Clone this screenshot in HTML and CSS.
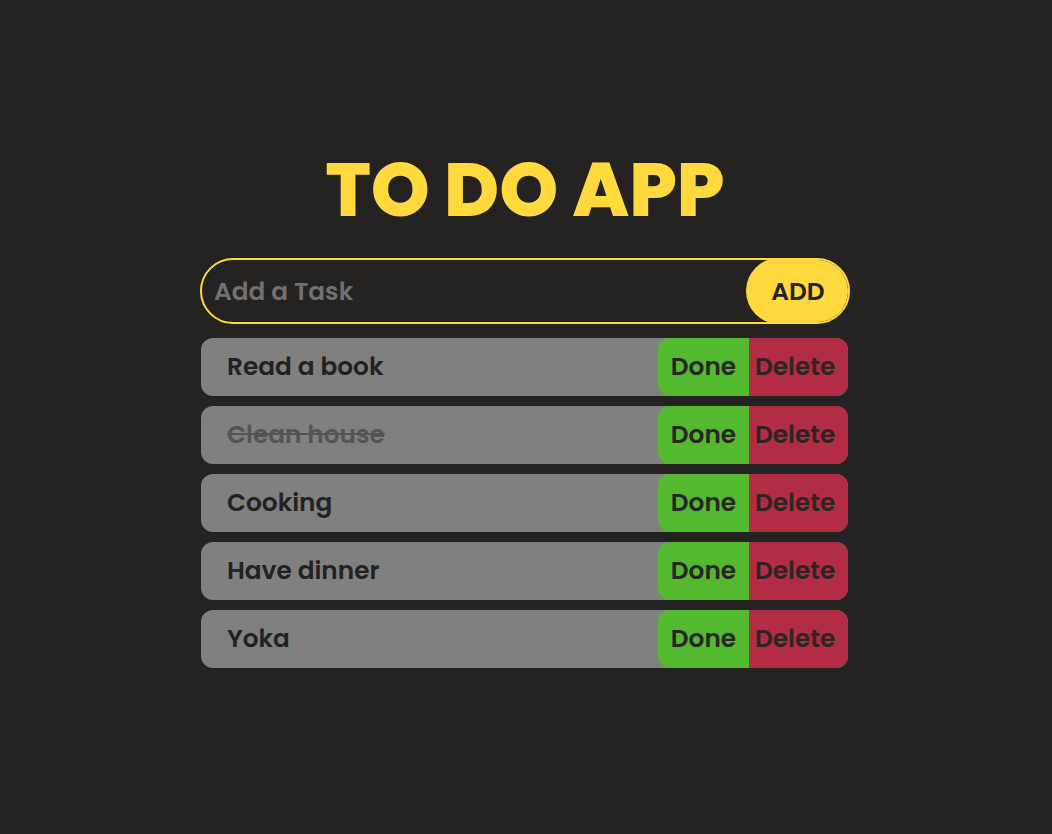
FILE: index.html
```html
<!DOCTYPE html>
<html>
<head>
<meta charset="utf-8">
<title>To Do App</title>
<link rel="stylesheet" href="styles.css">
</head>
<body>
<main class="app">
  <h1 class="title">TO DO APP</h1>
  <form class="add-form">
    <input class="add-input" type="text" placeholder="Add a Task">
    <button class="add-btn" type="button">ADD</button>
  </form>
  <ul class="list">
    <li class="item"><span class="item-text">Read a book</span><button class="btn done">Done</button><button class="btn delete">Delete</button></li>
    <li class="item"><span class="item-text completed">Clean house</span><button class="btn done">Done</button><button class="btn delete">Delete</button></li>
    <li class="item"><span class="item-text">Cooking</span><button class="btn done">Done</button><button class="btn delete">Delete</button></li>
    <li class="item"><span class="item-text">Have dinner</span><button class="btn done">Done</button><button class="btn delete">Delete</button></li>
    <li class="item"><span class="item-text">Yoka</span><button class="btn done">Done</button><button class="btn delete">Delete</button></li>
  </ul>
</main>
</body>
</html>
```
FILE: styles.css
```css
* { box-sizing: border-box; }
html, body {
  margin: 0;
  padding: 0;
  background: #242322;
  font-family: "Poppins", "Lato", "Noto Sans", sans-serif;
}
.app {
  width: 650px;
  margin-left: calc(50% - 326px);
  padding-top: 150px;
  display: flex;
  flex-direction: column;
}
.title {
  margin: 0 0 28px;
  text-align: center;
  color: #ffd93d;
  font-size: 75px;
  font-weight: 800;
  line-height: 80px;
}
.add-form {
  display: flex;
  height: 66px;
  border: 2px solid #ffd93d;
  border-radius: 33px;
  margin-bottom: 14px;
  overflow: hidden;
}
.add-input {
  flex: 1;
  background: transparent;
  border: none;
  outline: none;
  padding: 0 0 0 12px;
  font-family: inherit;
  font-size: 24.8px;
  font-weight: 600;
  color: #ddd;
}
.add-input::placeholder { color: #727070; }
.add-btn {
  width: 104px;
  margin: -2px -2px -2px 0;
  border: none;
  border-radius: 33px;
  background: #ffd93d;
  color: #242322;
  font-family: inherit;
  font-size: 24.8px;
  font-weight: 600;
}
.list {
  list-style: none;
  margin: 0 2px 0 1px;
  padding: 0;
  display: flex;
  flex-direction: column;
  gap: 10px;
}
.item {
  display: flex;
  height: 58px;
  background: #808080;
  border-radius: 12px;
}
.item-text {
  flex: 1;
  display: flex;
  align-items: center;
  padding: 0 0 2px 26px;
  font-size: 24.8px;
  font-weight: 600;
  color: #232222;
}
.item-text.completed {
  text-decoration: line-through;
  color: #555454;
}
.btn {
  border: none;
  font-family: inherit;
  font-size: 24.8px;
  font-weight: 600;
  color: #2a2626;
  padding: 0 0 2px 0;
  white-space: nowrap;
}
.done {
  width: 91px;
  background: #53b92f;
  border-radius: 12px 0 0 12px;
}
.delete {
  width: 99px;
  padding: 0 0 2px 6px;
  text-align: left;
  background: #b22c43;
  border-radius: 0 12px 12px 0;
}
```
